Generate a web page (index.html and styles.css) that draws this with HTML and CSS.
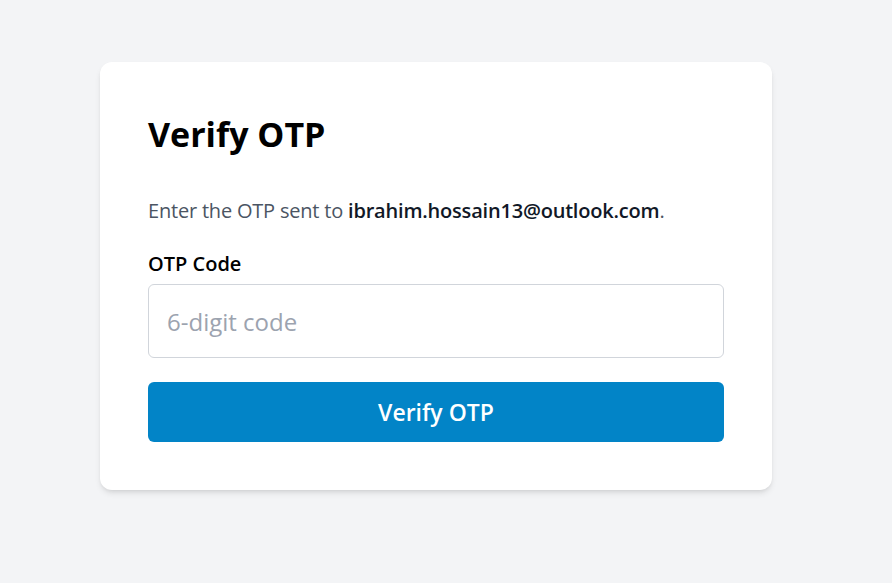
FILE: index.html
```html
<!DOCTYPE html>
<html lang="en">
<head>
    <meta charset="UTF-8">
    <meta name="viewport" content="width=device-width, initial-scale=1.0">
    <title>Verify OTP</title>
    <link rel="stylesheet" href="styles.css">
</head>
<body>
    <div class="page">
        <form class="card">
            <h1>Verify OTP</h1>
            <p class="info">Enter the OTP sent to <strong>ibrahim.hossain13@outlook.com</strong>.</p>
            <label for="otp" class="label">OTP Code</label>
            <input type="text" id="otp" class="otp-input" placeholder="6-digit code">
            <button type="button" class="verify-btn">Verify OTP</button>
        </form>
    </div>
</body>
</html>
```

FILE: styles.css
```css
body {
    font-family: 'Open Sans', 'Noto Sans', sans-serif;
    margin: 0;
    padding: 0;
    background-color: #f3f4f6;
}

.page {
    padding: 62px 100px;
}

.card {
    width: 672px;
    box-sizing: border-box;
    padding: 48px;
    background-color: #fff;
    border-radius: 12px;
    box-shadow: 0 4px 6px -1px rgba(0, 0, 0, 0.1), 0 2px 4px -2px rgba(0, 0, 0, 0.1);
    display: flex;
    flex-direction: column;
}

h1 {
    margin: 0;
    font-size: 34px;
    line-height: 48px;
    font-weight: 700;
    color: #000;
}

.info {
    margin: 39px 0 0;
    font-size: 20px;
    line-height: 28px;
    letter-spacing: -0.2px;
    color: #4b5563;
}

.info strong {
    color: #111827;
    font-weight: 600;
}

.label {
    margin-top: 25px;
    font-size: 20px;
    line-height: 28px;
    font-weight: 600;
    color: #000;
}

.otp-input {
    margin-top: 6px;
    height: 74px;
    box-sizing: border-box;
    padding: 0 18px;
    border: 1px solid #d1d5db;
    border-radius: 6px;
    font-family: inherit;
    font-size: 24px;
    color: #111827;
    outline: none;
}

.otp-input::placeholder {
    color: #9ca3af;
}

.verify-btn {
    margin-top: 24px;
    height: 60px;
    border: none;
    border-radius: 6px;
    background-color: #0284c7;
    color: #fff;
    font-family: inherit;
    font-size: 23px;
    font-weight: 600;
    cursor: pointer;
}
```
